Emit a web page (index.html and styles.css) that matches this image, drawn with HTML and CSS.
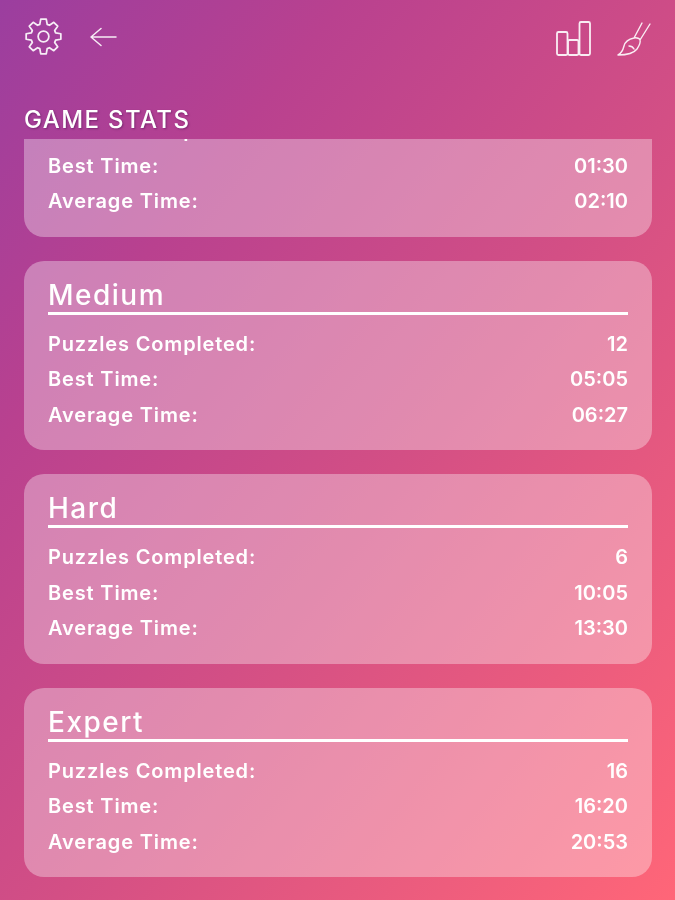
FILE: index.html
```html
<!DOCTYPE html>
<html lang="en">
<head>
    <meta charset="UTF-8">
    <meta name="viewport" content="width=device-width, initial-scale=1.0">
    <title>Game Stats</title>
    <link rel="stylesheet" href="styles.css">
</head>
<body>
    <div class="page">
        <header class="top">
            <div class="toolbar">
                <div class="tool-group">
                    <svg class="icon icon-gear" viewBox="0 0 40 40">
                        <polygon points="16.2,7.57 17.18,2.22 22.82,2.22 23.8,7.57 26.1,8.52 30.58,5.44 34.56,9.42 31.48,13.9 32.43,16.2 37.78,17.18 37.78,22.82 32.43,23.8 31.48,26.1 34.56,30.58 30.58,34.56 26.1,31.48 23.8,32.43 22.82,37.78 17.18,37.78 16.2,32.43 13.9,31.48 9.42,34.56 5.44,30.58 8.52,26.1 7.57,23.8 2.22,22.82 2.22,17.18 7.57,16.2 8.52,13.9 5.44,9.42 9.42,5.44 13.9,8.52"/>
                        <circle cx="20" cy="20" r="5.5"/>
                    </svg>
                    <svg class="icon icon-back" viewBox="0 0 28 20">
                        <path d="M27 10H2M12 1.5L2 10l10 8.5"/>
                    </svg>
                </div>
                <div class="tool-group">
                    <svg class="icon icon-bars" viewBox="0 0 36 36">
                        <rect x="2" y="12" width="10.5" height="23" rx="1.5"/>
                        <rect x="13" y="20" width="10.5" height="15" rx="1.5"/>
                        <rect x="24.5" y="2" width="10.5" height="33" rx="1.5"/>
                    </svg>
                    <svg class="icon icon-brush" viewBox="0 0 36 36">
                        <path d="M18 17L26 2M24 19L34 3M18 17c3-1 6 1 6 2 1 3-1 6-3 9-3 4-10 6-19 6 4-2 5-5 6-9 1-4 5-7 10-8zM13 25c2 0 4 1 5 3"/>
                    </svg>
                </div>
            </div>
            <h1 class="page-title">GAME STATS</h1>
        </header>

        <main class="stats-list">
            <section class="stat-card">
                <h2>Easy</h2>
                <div class="stat-row"><span>Puzzles Completed:</span><span class="stat-value">24</span></div>
                <div class="stat-row"><span>Best Time:</span><span class="stat-value">01:30</span></div>
                <div class="stat-row"><span>Average Time:</span><span class="stat-value">02:10</span></div>
            </section>
            <section class="stat-card">
                <h2>Medium</h2>
                <div class="stat-row"><span>Puzzles Completed:</span><span class="stat-value">12</span></div>
                <div class="stat-row"><span>Best Time:</span><span class="stat-value">05:05</span></div>
                <div class="stat-row"><span>Average Time:</span><span class="stat-value">06:27</span></div>
            </section>
            <section class="stat-card">
                <h2>Hard</h2>
                <div class="stat-row"><span>Puzzles Completed:</span><span class="stat-value">6</span></div>
                <div class="stat-row"><span>Best Time:</span><span class="stat-value">10:05</span></div>
                <div class="stat-row"><span>Average Time:</span><span class="stat-value">13:30</span></div>
            </section>
            <section class="stat-card">
                <h2>Expert</h2>
                <div class="stat-row"><span>Puzzles Completed:</span><span class="stat-value">16</span></div>
                <div class="stat-row"><span>Best Time:</span><span class="stat-value">16:20</span></div>
                <div class="stat-row"><span>Average Time:</span><span class="stat-value">20:53</span></div>
            </section>
        </main>
    </div>
</body>
</html>
```

FILE: styles.css
```css
body {
    margin: 0;
    font-family: Inter, "Liberation Sans", sans-serif;
    color: white;
}
.page {
    height: 900px;
    display: flex;
    flex-direction: column;
    overflow: hidden;
    background: linear-gradient(128deg, #9b3e9f 0%, #b9418f 25%, #d34f85 55%, #ff6678 100%);
    filter: blur(0.4px);
}
.top {
    height: 139px;
    flex-shrink: 0;
    padding: 0 23px 0 24px;
    box-sizing: border-box;
}
.toolbar {
    display: flex;
    justify-content: space-between;
    height: 105px;
    padding-top: 17px;
    box-sizing: border-box;
}
.tool-group {
    display: flex;
    align-items: flex-start;
}
.icon {
    display: block;
    fill: none;
    stroke: white;
    stroke-width: 1.8;
    stroke-linejoin: round;
    stroke-linecap: round;
    opacity: 0.9;
}
.icon-gear {
    width: 39px;
    height: 39px;
}
.icon-back {
    width: 28px;
    height: 20px;
    margin: 10px 0 0 26px;
    stroke-width: 1.5;
}
.icon-bars {
    width: 36px;
    height: 36px;
    margin: 3px 0 0 0;
}
.icon-brush {
    width: 36px;
    height: 36px;
    margin: 4px 0 0 25px;
    stroke-width: 1.4;
}
.page-title {
    margin: 0;
    font-size: 24px;
    line-height: 30px;
    font-weight: 500;
    letter-spacing: 1.4px;
    text-shadow: 1px 1px 2px rgba(90, 20, 90, 0.6);
}
.stats-list {
    flex: 1;
    min-height: 0;
    display: flex;
    flex-direction: column;
    justify-content: flex-end;
    gap: 24px;
    padding: 0 23px 23px 24px;
    overflow: hidden;
}
.stat-card {
    flex-shrink: 0;
    padding: 16px 24px 17px;
    border-radius: 20px;
    background: rgba(255, 255, 255, 0.34);
}
.stat-card h2 {
    margin: 0 0 12px;
    height: 35px;
    border-bottom: 3px solid white;
    font-size: 28px;
    line-height: 37px;
    font-weight: 500;
    letter-spacing: 1.5px;
}
.stat-row {
    display: flex;
    justify-content: space-between;
    height: 35.5px;
    line-height: 35.5px;
    font-size: 20px;
    font-weight: 600;
    letter-spacing: 0.85px;
}
.stat-value {
    letter-spacing: 0;
}
```
